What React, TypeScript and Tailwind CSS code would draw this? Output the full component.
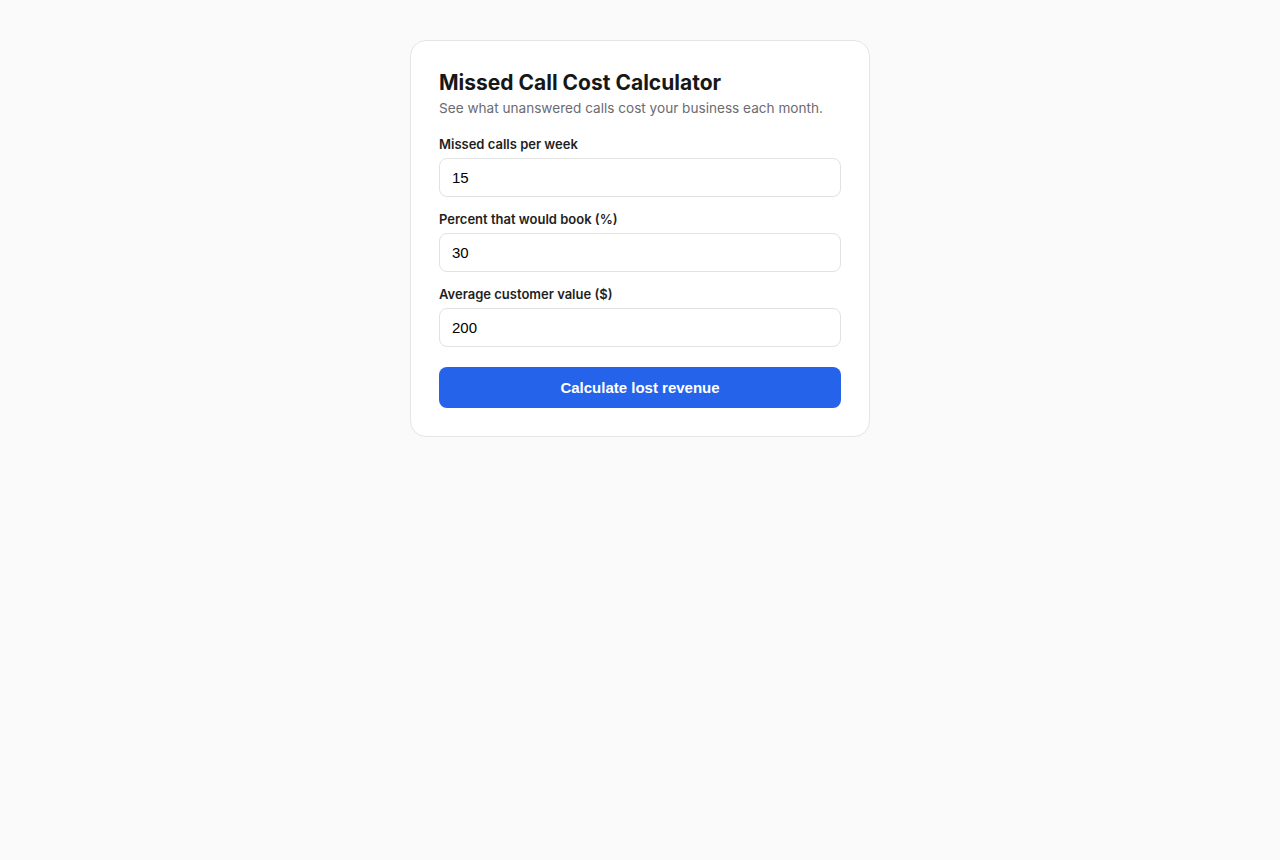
import React from "react";

const fields = [
  { label: "Missed calls per week", value: "15" },
  { label: "Percent that would book (%)", value: "30" },
  { label: "Average customer value ($)", value: "200" },
];

export default function App() {
  return (
    <div className="min-h-[860px] w-full bg-[#fafafa] pt-10 font-['Inter',sans-serif]">
      <div className="mx-auto w-[460px] rounded-2xl border border-[#e5e5e5] bg-white p-7">
        <h1 className="text-[21px] font-bold leading-[27px] text-[#171717]">
          Missed Call Cost Calculator
        </h1>
        <p className="mt-[2px] text-[13.6px] leading-5 text-[#6b6b70]">
          See what unanswered calls cost your business each month.
        </p>
        <div className="mt-[17px] flex flex-col gap-[13px]">
          {fields.map((f) => (
            <div key={f.label} className="flex flex-col gap-[5px]">
              <label className="text-[13px] font-semibold leading-[18px] text-[#1f1f1f]">
                {f.label}
              </label>
              <input
                type="text"
                defaultValue={f.value}
                className="h-[39px] w-full rounded-lg border border-[#e2e2e2] bg-white px-3 text-[15px] text-black outline-none font-['Liberation_Sans',Arial,sans-serif]"
              />
            </div>
          ))}
        </div>
        <button className="mt-5 h-[41px] w-full rounded-lg bg-[#2563eb] pt-px text-[15px] font-bold text-white font-['Liberation_Sans',Arial,sans-serif]">
          Calculate lost revenue
        </button>
      </div>
    </div>
  );
}
